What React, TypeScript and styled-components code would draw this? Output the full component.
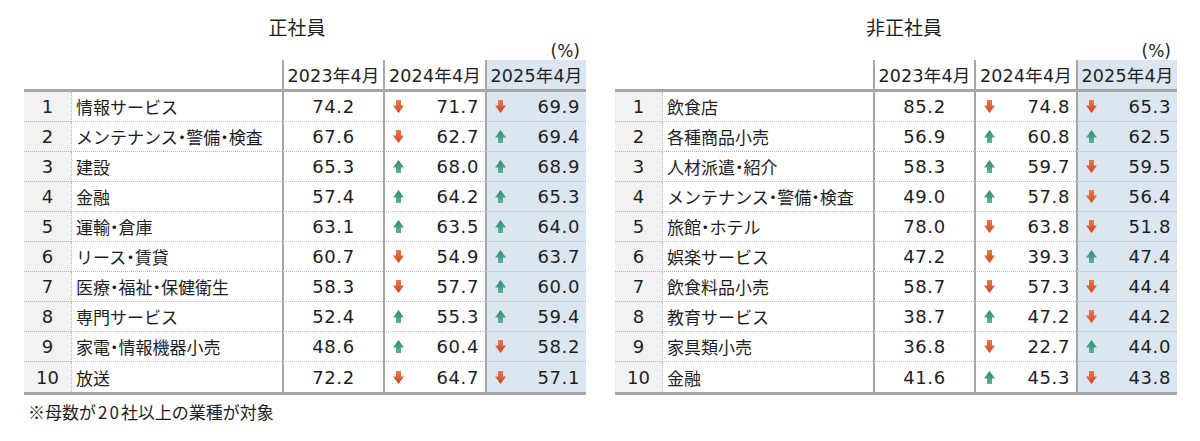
import styled, { createGlobalStyle } from "styled-components";

const lineColor = "#a6a6a6";
const dotColor = "#b8b8b8";
const blueBg = "#dce6f1";
const rankBg = "#f2f2f2";

const GlobalStyle = createGlobalStyle`
  body {
    margin: 0;
    background: #ffffff;
    color: #1e1e1e;
    font-family: "Noto Sans CJK JP", sans-serif;
  }
`;

const Page = styled.div`
  display: flex;
  gap: 29px;
  padding-left: 24px;
  width: 1200px;
  height: 441px;
  box-sizing: border-box;
`;

const Panel = styled.div`
  display: flex;
  flex-direction: column;
  width: 562px;
  padding-top: 12px;
`;

const Title = styled.div<{ $shift: number }>`
  height: 30px;
  line-height: 30px;
  text-align: center;
  font-size: 19px;
  padding-left: ${(p) => (p.$shift > 0 ? p.$shift * 2 : 0)}px;
  padding-right: ${(p) => (p.$shift < 0 ? -p.$shift * 2 : 0)}px;
`;

const Unit = styled.div`
  height: 18px;
  line-height: 18px;
  text-align: right;
  padding-right: 6px;
  font-family: "DejaVu Sans", "Noto Sans CJK JP", sans-serif;
  font-size: 17px;
`;

const cols = "47px 211px 101px 102px 101px";

const HeadRow = styled.div`
  display: grid;
  grid-template-columns: ${cols};
  height: 29px;
`;

const HeadCell = styled.div<{ $accent?: boolean }>`
  display: flex;
  align-items: center;
  justify-content: center;
  border-left: 2px solid ${lineColor};
  background: ${(p) => (p.$accent ? blueBg : "transparent")};
  font-family: "DejaVu Sans", "Noto Sans CJK JP", sans-serif;
  font-size: 17.5px;
  letter-spacing: 0.2px;
  white-space: nowrap;
`;

const Body = styled.div`
  border-top: 3px solid ${lineColor};
  border-bottom: 3px solid ${lineColor};
`;

const Row = styled.div<{ $last: boolean }>`
  display: grid;
  grid-template-columns: ${cols};
  height: 30px;

  & > div {
    box-sizing: border-box;
    border-bottom: ${(p) => (p.$last ? "none" : `1px dotted ${dotColor}`)};
  }
`;

const RankCell = styled.div`
  display: flex;
  align-items: center;
  justify-content: center;
  background: ${rankBg};
  font-family: "DejaVu Sans", sans-serif;
  font-size: 18px;
`;

const NameCell = styled.div`
  display: flex;
  align-items: center;
  padding-left: 4px;
  border-left: 1px dotted ${dotColor};
  font-size: 17px;
  white-space: nowrap;

  /* the middle dot sits narrow in the original font */
  & .dot {
    font-feature-settings: "palt";
  }
`;

const ValueCell = styled.div`
  display: flex;
  align-items: center;
  justify-content: center;
  border-left: 2px solid ${lineColor};
  font-family: "DejaVu Sans", sans-serif;
  font-size: 18px;
  letter-spacing: 0.6px;
`;

const TrendCell = styled(ValueCell)<{ $accent?: boolean }>`
  justify-content: space-between;
  padding: 0 6px 0 8px;
  background: ${(p) => (p.$accent ? blueBg : "transparent")};
`;

const Note = styled.div`
  margin-top: 7px;
  padding-left: 4px;
  height: 20px;
  line-height: 20px;
  font-size: 17px;

  & span {
    letter-spacing: 2px;
    padding-left: 2px;
  }
`;

type Item = { name: string; v: [number, number, number] };

const regular: Item[] = [
  { name: "情報サービス", v: [74.2, 71.7, 69.9] },
  { name: "メンテナンス・警備・検査", v: [67.6, 62.7, 69.4] },
  { name: "建設", v: [65.3, 68.0, 68.9] },
  { name: "金融", v: [57.4, 64.2, 65.3] },
  { name: "運輸・倉庫", v: [63.1, 63.5, 64.0] },
  { name: "リース・賃貸", v: [60.7, 54.9, 63.7] },
  { name: "医療・福祉・保健衛生", v: [58.3, 57.7, 60.0] },
  { name: "専門サービス", v: [52.4, 55.3, 59.4] },
  { name: "家電・情報機器小売", v: [48.6, 60.4, 58.2] },
  { name: "放送", v: [72.2, 64.7, 57.1] },
];

const nonRegular: Item[] = [
  { name: "飲食店", v: [85.2, 74.8, 65.3] },
  { name: "各種商品小売", v: [56.9, 60.8, 62.5] },
  { name: "人材派遣・紹介", v: [58.3, 59.7, 59.5] },
  { name: "メンテナンス・警備・検査", v: [49.0, 57.8, 56.4] },
  { name: "旅館・ホテル", v: [78.0, 63.8, 51.8] },
  { name: "娯楽サービス", v: [47.2, 39.3, 47.4] },
  { name: "飲食料品小売", v: [58.7, 57.3, 44.4] },
  { name: "教育サービス", v: [38.7, 47.2, 44.2] },
  { name: "家具類小売", v: [36.8, 22.7, 44.0] },
  { name: "金融", v: [41.6, 45.3, 43.8] },
];

function Arrow({ up }: { up: boolean }) {
  const id = up ? "arrowUp" : "arrowDown";
  return (
    <svg width="11" height="13" viewBox="0 0 11 13" style={{ flexShrink: 0 }}>
      <defs>
        <linearGradient id={id} x1="0" y1="0" x2="0" y2="1">
          <stop offset="0" stopColor={up ? "#5fb29a" : "#ea7a4c"} />
          <stop offset="1" stopColor={up ? "#2f8a70" : "#cf4424"} />
        </linearGradient>
      </defs>
      <path
        d="M3 0 H8 V5.5 H11 L5.5 13 L0 5.5 H3 Z"
        fill={`url(#${id})`}
        transform={up ? "rotate(180 5.5 6.5)" : undefined}
      />
    </svg>
  );
}

function Name({ text }: { text: string }) {
  const parts = text.split("・");
  return (
    <NameCell>
      {parts.map((p, i) => (
        <span key={i}>
          {i > 0 && <span className="dot">・</span>}
          {p}
        </span>
      ))}
    </NameCell>
  );
}

function RankTable({ title, shift, items }: { title: string; shift: number; items: Item[] }) {
  return (
    <Panel>
      <Title $shift={shift}>{title}</Title>
      <Unit>(%)</Unit>
      <HeadRow>
        <div />
        <div />
        <HeadCell>2023年4月</HeadCell>
        <HeadCell>2024年4月</HeadCell>
        <HeadCell $accent>2025年4月</HeadCell>
      </HeadRow>
      <Body>
        {items.map((it, i) => (
          <Row key={it.name + i} $last={i === items.length - 1}>
            <RankCell>{i + 1}</RankCell>
            <Name text={it.name} />
            <ValueCell>{it.v[0].toFixed(1)}</ValueCell>
            <TrendCell>
              <Arrow up={it.v[1] > it.v[0]} />
              {it.v[1].toFixed(1)}
            </TrendCell>
            <TrendCell $accent>
              <Arrow up={it.v[2] > it.v[1]} />
              {it.v[2].toFixed(1)}
            </TrendCell>
          </Row>
        ))}
      </Body>
      {shift < 0 && (
        <Note>
          ※母数が<span>20</span>社以上の業種が対象
        </Note>
      )}
    </Panel>
  );
}

export default function App() {
  return (
    <>
      <GlobalStyle />
      <Page>
        <RankTable title="正社員" shift={-8} items={regular} />
        <RankTable title="非正社員" shift={8} items={nonRegular} />
      </Page>
    </>
  );
}
